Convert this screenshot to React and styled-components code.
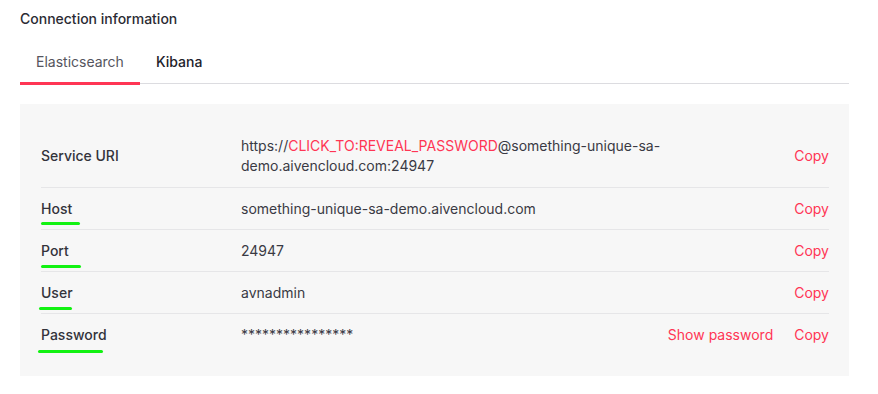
import React from 'react';
import styled, { createGlobalStyle } from 'styled-components';

const GlobalStyle = createGlobalStyle`
  body {
    margin: 0;
    background: #fff;
    font-family: Inter, "Noto Sans", sans-serif;
    color: #3a3a44;
  }
`

const Page = styled.div`
  padding: 9px 29px 0 20px;
`
const Title = styled.h3`
  margin: 0;
  font-size: 14px;
  line-height: 20px;
  font-weight: 500;
  color: #2b2b33;
`
const Tabs = styled.div`
  display: flex;
  margin-top: 11px;
  border-bottom: 1px solid #dcdce0;
`
const Tab = styled.div`
  padding: 0 16px;
  height: 43px;
  line-height: 43px;
  font-size: 14px;
  font-weight: ${p => (p.active ? 400 : 500)};
  color: ${p => (p.active ? '#55555e' : '#22222a')};
  position: relative;
  &::after {
    content: '';
    display: ${p => (p.active ? 'block' : 'none')};
    position: absolute;
    left: 0;
    right: 0;
    bottom: -2px;
    height: 3px;
    background: #ff3554;
  }
`
const Panel = styled.div`
  margin-top: 20px;
  background: #f7f7f7;
  padding: 21px 20px 21px 21px;
`
const Row = styled.div`
  display: flex;
  align-items: center;
  padding: 11px 0 ${p => (p.first ? 11 : 10)}px;
  font-size: 14px;
  line-height: 20px;
  border-top: ${p => (p.first ? 'none' : '1px solid #e6e6e8')};
`
const Label = styled.div`
  width: 200px;
  flex-shrink: 0;
  font-weight: 500;
  color: #33333b;
  position: relative;
`
// green hand-drawn marker under some labels
const Mark = styled.span`
  position: absolute;
  left: ${p => p.left}px;
  width: ${p => p.width}px;
  bottom: -${p => p.drop}px;
  height: 3.5px;
  border-radius: 2px;
  background: #12f212;
`
const Value = styled.div`
  flex: 1;
  max-width: 440px;
  color: #3a3a44;
`
const Secret = styled.span`
  color: #ff3554;
`
const Actions = styled.div`
  display: flex;
  gap: 21px;
  flex-shrink: 0;
  margin-left: auto;
`
const Action = styled.a`
  color: #ff3554;
  cursor: pointer;
`

const rows = [
  { label: 'Host', value: 'something-unique-sa-demo.aivencloud.com', mark: [0, 39, 6] },
  { label: 'Port', value: '24947', mark: [0, 40, 7] },
  { label: 'User', value: 'avnadmin', mark: [-2, 33, 7] },
  { label: 'Password', value: '****************', show: true, mark: [-3, 65, 8] },
]

export default function App() {
  return (
    <Page>
      <GlobalStyle />
      <Title>Connection information</Title>
      <Tabs>
        <Tab active>Elasticsearch</Tab>
        <Tab>Kibana</Tab>
      </Tabs>
      <Panel>
        <Row first>
          <Label>Service URI</Label>
          <Value>
            https://<Secret>CLICK_TO:REVEAL_PASSWORD</Secret>@something-unique-sa-demo.aivencloud.com:24947
          </Value>
          <Actions><Action>Copy</Action></Actions>
        </Row>
        {rows.map(r => (
          <Row key={r.label}>
            <Label>
              {r.label}
              <Mark left={r.mark[0]} width={r.mark[1]} drop={r.mark[2]} />
            </Label>
            <Value>{r.value}</Value>
            <Actions>
              {r.show && <Action>Show password</Action>}
              <Action>Copy</Action>
            </Actions>
          </Row>
        ))}
      </Panel>
    </Page>
  );
}
